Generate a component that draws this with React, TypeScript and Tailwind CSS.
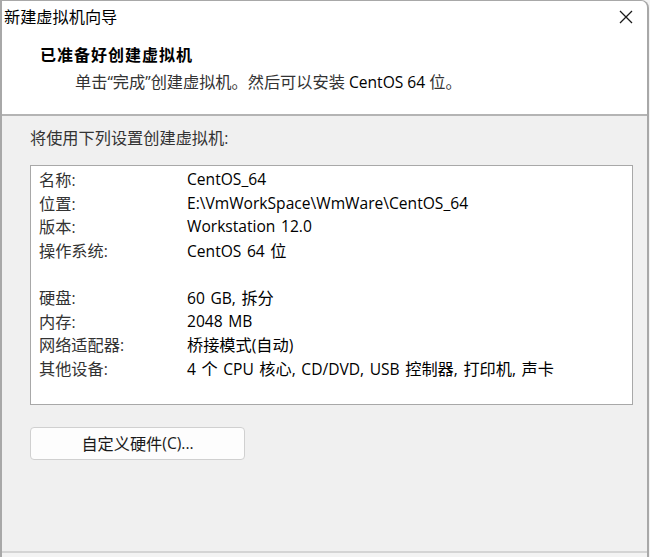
import React from "react";

const font = {
  fontFamily: '"Segoe UI", "Open Sans", "Noto Sans CJK SC", sans-serif',
};

const HAN = /([\u3000-\u303f\u3400-\u9fff\uff00-\uffef]+)/;

// Renders Han/full-width runs a touch larger than the Latin runs around them,
// the way the dialog's CJK fallback face sits next to its UI face.
function Mixed({ text, bold = false }: { text: string; bold?: boolean }) {
  const parts = text.split(HAN);
  return (
    <>
      {parts.map((p, i) =>
        i % 2 === 1 ? (
          <span
            key={i}
            className={bold ? "text-[16px] tracking-[1px]" : "text-[16.2px]"}
            style={{ fontFamily: '"Noto Sans CJK SC", sans-serif' }}
          >
            {p}
          </span>
        ) : (
          <span key={i}>{p}</span>
        )
      )}
    </>
  );
}

const rows: Array<[string, string] | null> = [
  ["名称:", "CentOS_64"],
  ["位置:", "E:\\VmWorkSpace\\WmWare\\CentOS_64"],
  ["版本:", "Workstation 12.0"],
  ["操作系统:", "CentOS 64 位"],
  null,
  ["硬盘:", "60 GB, 拆分"],
  ["内存:", "2048 MB"],
  ["网络适配器:", "桥接模式(自动)"],
  ["其他设备:", "4 个 CPU 核心, CD/DVD, USB 控制器, 打印机, 声卡"],
];

export default function App() {
  return (
    <div
      className="w-[650px] h-[557px] bg-[#f3f3f3] overflow-hidden text-[15.6px] text-[#1a1a1a]"
      style={font}
    >
      <div className="w-[649px] h-[557px] flex flex-col bg-[#f0f0f0] border-l-2 border-t border-r-2 border-[#a8a8a8] rounded-tr-[8px] overflow-hidden">
        {/* title bar + header */}
        <div className="h-[115px] bg-white border-b-2 border-[#b4b4b4] flex flex-col shrink-0">
          <div className="h-[32px] flex items-center justify-between pl-[2px] pr-[14px]">
            <span className="text-black">
              <Mixed text="新建虚拟机向导" />
            </span>
            <svg width="14" height="14" viewBox="0 0 14 14">
              <path d="M1 1 L13 13 M13 1 L1 13" stroke="#1a1a1a" strokeWidth="1.3" />
            </svg>
          </div>
          <div className="pl-[38px] pt-[9px] font-bold text-black leading-[24px]">
            <Mixed text="已准备好创建虚拟机" bold />
          </div>
          <div className="pl-[73px] pt-[2px] text-[#333] leading-[24px]">
            <Mixed text="单击“完成”创建虚拟机。然后可以安装 " />
            <span className="text-black">CentOS 64 </span>
            <Mixed text="位。" />
          </div>
        </div>

        {/* body */}
        <div className="flex-1 flex flex-col pl-[28px] pr-[14px]">
          <div className="pt-[9px] leading-[24px] text-[#333]">
            <Mixed text="将使用下列设置创建虚拟机:" />
          </div>
          <div className="mt-[15px] w-[603px] h-[240px] bg-white border border-[#a8a8a8] px-[8px] pt-[2px]">
            {rows.map((r, i) =>
              r ? (
                <div key={i} className="flex leading-[23.6px] h-[23.6px] whitespace-nowrap">
                  <span className="w-[148px] text-[#333] shrink-0">
                    <Mixed text={r[0]} />
                  </span>
                  <span className="text-black [word-spacing:1.5px]">
                    <Mixed text={r[1]} />
                  </span>
                </div>
              ) : (
                <div key={i} className="h-[23.6px]" />
              )
            )}
          </div>
          <button className="mt-[22px] w-[215px] h-[33px] bg-[#fdfdfd] border border-[#d0d0d0] rounded-[4px] text-[#1a1a1a] flex items-center justify-center">
            <Mixed text="自定义硬件(C)..." />
          </button>
          <div className="flex-1" />
        </div>
        <div className="h-[6px] border-t-2 border-[#d4d4d4] bg-[#f3f3f3] shrink-0" />
      </div>
    </div>
  );
}
